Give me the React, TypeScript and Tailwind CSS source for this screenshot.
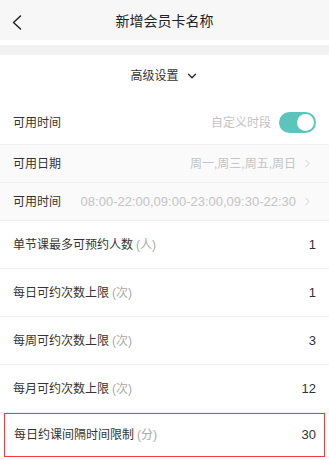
import { ChevronDown, ChevronRight } from "lucide-react";

const font = { fontFamily: '"Liberation Sans", "Noto Sans CJK SC", sans-serif' };

const limits = [
  { label: "单节课最多可预约人数", unit: "(人)", value: "1" },
  { label: "每日可约次数上限", unit: "(次)", value: "1" },
  { label: "每周可约次数上限", unit: "(次)", value: "3" },
  { label: "每月可约次数上限", unit: "(次)", value: "12" },
];

const App = () => {
  return (
    <div className="w-[329px] h-[460px] overflow-hidden bg-white text-[#333]" style={font}>
      {/* Header */}
      <div className="h-10 bg-[#f7f7f7] flex items-center relative pt-[3px]">
        <svg className="absolute left-0 top-0" width="30" height="40" viewBox="0 0 30 40" fill="none">
          <polyline points="20.5,16 13.5,22.5 20.5,29" stroke="#222" strokeWidth="1.5" strokeLinecap="round" strokeLinejoin="round" />
        </svg>
        <div className="flex-1 text-center text-[14px] text-[#222]">新增会员卡名称</div>
      </div>
      <div className="h-[5px] bg-white" />
      <div className="h-[10px] bg-[#f2f2f2]" />

      {/* Advanced settings */}
      <div className="h-[46px] flex items-center justify-center gap-[6px] pb-1 text-[12px] text-[#333]">
        高级设置
        <ChevronDown className="w-[14px] h-[14px] text-[#222]" strokeWidth={2.2} />
      </div>

      <div className="h-[44px] flex items-center justify-between px-[13px] border-b border-[#efefef]">
        <span className="text-[12px]">可用时间</span>
        <div className="flex items-center gap-[8px]">
          <span className="text-[12px] text-[#c4c4c4]">自定义时段</span>
          <div className="w-[37px] h-[21px] rounded-full bg-[#5bc4bb] flex items-center justify-end pr-[2px]">
            <div className="w-[17px] h-[17px] rounded-full bg-white" />
          </div>
        </div>
      </div>

      <div className="h-[38px] flex items-center justify-between pl-[13px] pr-[15px] bg-[#fafafa] border-b border-[#efefef]">
        <span className="text-[12px]">可用日期</span>
        <div className="flex items-center gap-[5px] text-[12px] text-[#c4c4c4]">
          周一,周三,周五,周日
          <ChevronRight className="w-[13px] h-[13px]" strokeWidth={1.5} />
        </div>
      </div>

      <div className="h-[38px] flex items-center justify-between pl-[13px] pr-[15px] bg-[#fafafa] border-b border-[#efefef]">
        <span className="text-[12px]">可用时间</span>
        <div className="flex items-center gap-[5px] text-[13px] text-[#c4c4c4]">
          08:00-22:00,09:00-23:00,09:30-22:30
          <ChevronRight className="w-[13px] h-[13px]" strokeWidth={1.5} />
        </div>
      </div>

      {limits.map((row) => (
        <div
          key={row.label}
          className="h-[48px] flex items-center justify-between pl-[13px] pr-[13px] border-b border-[#f0f0f0]"
        >
          <span className="text-[12px]">
            {row.label}
            <span className="text-[#aaa] ml-[3px]">{row.unit}</span>
          </span>
          <span className="text-[13px]">{row.value}</span>
        </div>
      ))}

      {/* highlighted row */}
      <div className="mx-[4px] h-[44px] flex items-center justify-between pl-[9px] pr-[8px] border-[1.5px] border-solid border-[#f03c3c]">
        <span className="text-[12px]">
          每日约课间隔时间限制
          <span className="text-[#aaa] ml-[3px]">(分)</span>
        </span>
        <span className="text-[13px]">30</span>
      </div>
    </div>
  );
};

export default App;
